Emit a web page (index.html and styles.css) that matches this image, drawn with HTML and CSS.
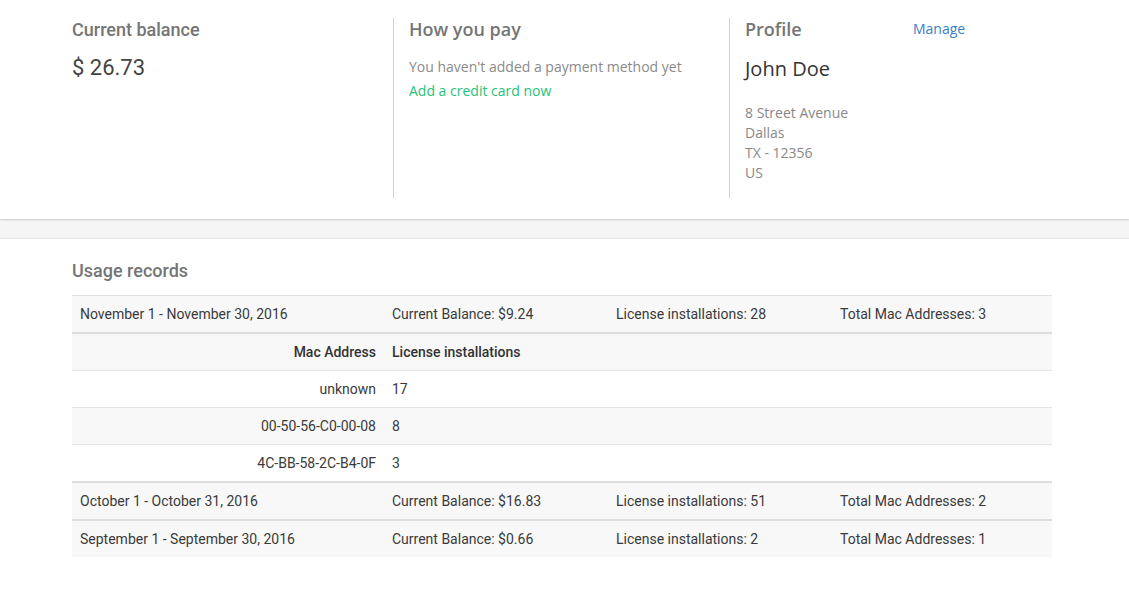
FILE: index.html
```html
<!DOCTYPE html>
<html>
<head>
<meta charset="utf-8">
<link rel="stylesheet" href="styles.css">
</head>
<body>
<section class="summary">
  <div class="cols">
    <div class="col">
      <h2 class="heading roboto">Current balance</h2>
      <div class="amount">$ 26.73</div>
    </div>
    <div class="col divided">
      <h2 class="heading">How you pay</h2>
      <p class="note">You haven't added a payment method yet</p>
      <a class="add-card" href="#">Add a credit card now</a>
    </div>
    <div class="col divided">
      <div class="profile-head">
        <h2 class="heading">Profile</h2>
        <a class="manage" href="#">Manage</a>
      </div>
      <div class="name">John Doe</div>
      <div class="address">
        <div>8 Street Avenue</div>
        <div>Dallas</div>
        <div>TX - 12356</div>
        <div>US</div>
      </div>
    </div>
  </div>
</section>
<div class="band"></div>
<section class="usage">
  <h2 class="heading roboto">Usage records</h2>
  <div class="records">
    <div class="row month first">
      <div>November 1 - November 30, 2016</div>
      <div>Current Balance: $9.24</div>
      <div>License installations: 28</div>
      <div>Total Mac Addresses: 3</div>
    </div>
    <div class="row sub head shade">
      <div class="right">Mac Address</div>
      <div>License installations</div>
      <div></div>
      <div></div>
    </div>
    <div class="row sub">
      <div class="right">unknown</div>
      <div>17</div>
      <div></div>
      <div></div>
    </div>
    <div class="row sub shade">
      <div class="right">00-50-56-C0-00-08</div>
      <div>8</div>
      <div></div>
      <div></div>
    </div>
    <div class="row sub">
      <div class="right">4C-BB-58-2C-B4-0F</div>
      <div>3</div>
      <div></div>
      <div></div>
    </div>
    <div class="row month">
      <div>October 1 - October 31, 2016</div>
      <div>Current Balance: $16.83</div>
      <div>License installations: 51</div>
      <div>Total Mac Addresses: 2</div>
    </div>
    <div class="row month">
      <div>September 1 - September 30, 2016</div>
      <div>Current Balance: $0.66</div>
      <div>License installations: 2</div>
      <div>Total Mac Addresses: 1</div>
    </div>
  </div>
</section>
</body>
</html>
```
FILE: styles.css
```css
* { box-sizing: content-box; }
html, body { margin: 0; padding: 0; background: #fff; }
body { font-family: "Open Sans", "Liberation Sans", sans-serif; color: #444; }

.summary {
  background: #fff;
  padding: 18px 0 21px;
  box-shadow: 0 1px 2px rgba(0,0,0,0.18);
  position: relative;
  z-index: 1;
}
.cols {
  display: grid;
  grid-template-columns: 337px 336px 339px;
  margin-left: 56px;
}
.col {
  padding: 0 16px 15px;
}
.col.divided { border-left: 1px solid #cfcfcf; padding-left: 15px; }

.heading {
  margin: 0;
  font-family: "Open Sans", sans-serif;
  font-weight: 600;
  font-size: 18px;
  line-height: 22px;
  color: #757575;
}
.heading.roboto {
  font-family: Roboto, sans-serif;
  font-weight: 500;
  padding-top: 1px;
  line-height: 21px;
}

.amount {
  margin-top: 14px;
  font-family: Roboto, sans-serif;
  font-size: 22px;
  line-height: 28px;
  color: #444;
}
.note {
  margin: 15px 0 0;
  font-size: 14px;
  line-height: 24px;
  color: #8a8a8a;
}
.add-card {
  display: block;
  font-size: 14px;
  line-height: 24px;
  color: #1fc27a;
  text-decoration: none;
}
.profile-head {
  display: grid;
  grid-template-columns: 168px 1fr;
  align-items: center;
}
.manage {
  font-size: 14px;
  line-height: 22px;
  color: #3a80c6;
  text-decoration: none;
}
.name {
  margin-top: 15px;
  font-size: 20px;
  line-height: 28px;
  color: #333;
}
.address {
  margin-top: 20px;
  font-size: 14px;
  line-height: 20px;
  color: #888;
}

.band {
  height: 19px;
  background: #f5f5f5;
  border-bottom: 1px solid #e4e4e4;
}

.usage {
  padding: 20px 0 30px 72px;
}
.records {
  margin-top: 14px;
  width: 980px;
  font-family: Roboto, sans-serif;
  font-size: 14px;
  color: #3a3a3a;
}
.row {
  display: grid;
  grid-template-columns: 312px 224px 224px 220px;
  height: 36px;
  align-items: center;
}
.row > div { padding: 0 8px; white-space: nowrap; }
.row .right { text-align: right; }
.month { background: #f8f8f8; border-top: 2px solid #dddddd; }
.month.first { border-top: 1px solid #e2e2e2; }
.sub { border-top: 1px solid #e4e4e4; background: #fff; }
.sub.shade { background: #f8f8f8; }
.sub.head { border-top-width: 2px; border-top-color: #dddddd; font-weight: 500; color: #333; }
```
